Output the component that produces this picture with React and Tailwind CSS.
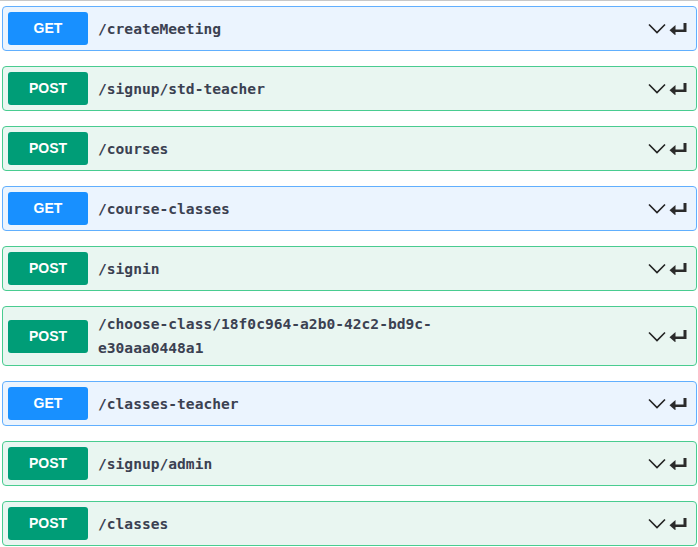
import React from 'react';

const endpoints = [
  { method: 'GET', lines: ['/createMeeting'] },
  { method: 'POST', lines: ['/signup/std-teacher'] },
  { method: 'POST', lines: ['/courses'] },
  { method: 'GET', lines: ['/course-classes'] },
  { method: 'POST', lines: ['/signin'] },
  { method: 'POST', lines: ['/choose-class/18f0c964-a2b0-42c2-bd9c-', 'e30aaa0448a1'] },
  { method: 'GET', lines: ['/classes-teacher'] },
  { method: 'POST', lines: ['/signup/admin'] },
  { method: 'POST', lines: ['/classes'] },
];

const styles = {
  GET: {
    block: 'border-[#61affe] bg-[#ebf4fe]',
    badge: 'bg-[#1890ff]',
  },
  POST: {
    block: 'border-[#49cc90] bg-[#e9f6f1]',
    badge: 'bg-[#009d77]',
  },
};

const Chevron = () => (
  <svg width="18" height="11" viewBox="0 0 18 11" className="shrink-0">
    <path d="M1 1.5 L9 9.5 L17 1.5" fill="none" stroke="#222" strokeWidth="1.6" />
  </svg>
);

const ReturnArrow = () => (
  <svg width="18" height="12" viewBox="0 0 18 12" className="shrink-0">
    <path d="M14.5 0 H17.5 V9 H6 V6.5 H14.5 Z" fill="#2b2b2b" />
    <path d="M0.5 7.75 L6.5 2.5 V13 Z" fill="#2b2b2b" transform="translate(0,-0.5)" />
  </svg>
);

const OpBlock = ({ method, lines }) => {
  const s = styles[method];
  return (
    <div className={`ml-[2px] mr-px mb-[15px] rounded border ${s.block}`}>
      <div className="flex items-center py-[5px] pl-[5px] pr-[9px]">
        <span
          className={`${s.badge} flex h-[33px] w-20 shrink-0 items-center justify-center rounded-[3px] text-[14px] font-bold text-white`}
          style={{ fontFamily: '"Liberation Sans", Arial, sans-serif' }}
        >
          {method}
        </span>
        <div
          className="flex-1 px-[10px] text-[14.6px] font-bold leading-6 text-[#3b4151]"
          style={{ fontFamily: '"DejaVu Sans Mono", monospace' }}
        >
          {lines.map((l) => (
            <div key={l}>{l}</div>
          ))}
        </div>
        <div className="flex items-center gap-[3px]">
          <Chevron />
          <ReturnArrow />
        </div>
      </div>
    </div>
  );
};

export default function App() {
  return (
    <div className="min-h-[547px] w-full bg-white">
      <div className="mb-[5px] h-px bg-[#c8c8c8]" />
      {endpoints.map((e, i) => (
        <OpBlock key={i} method={e.method} lines={e.lines} />
      ))}
    </div>
  );
}
